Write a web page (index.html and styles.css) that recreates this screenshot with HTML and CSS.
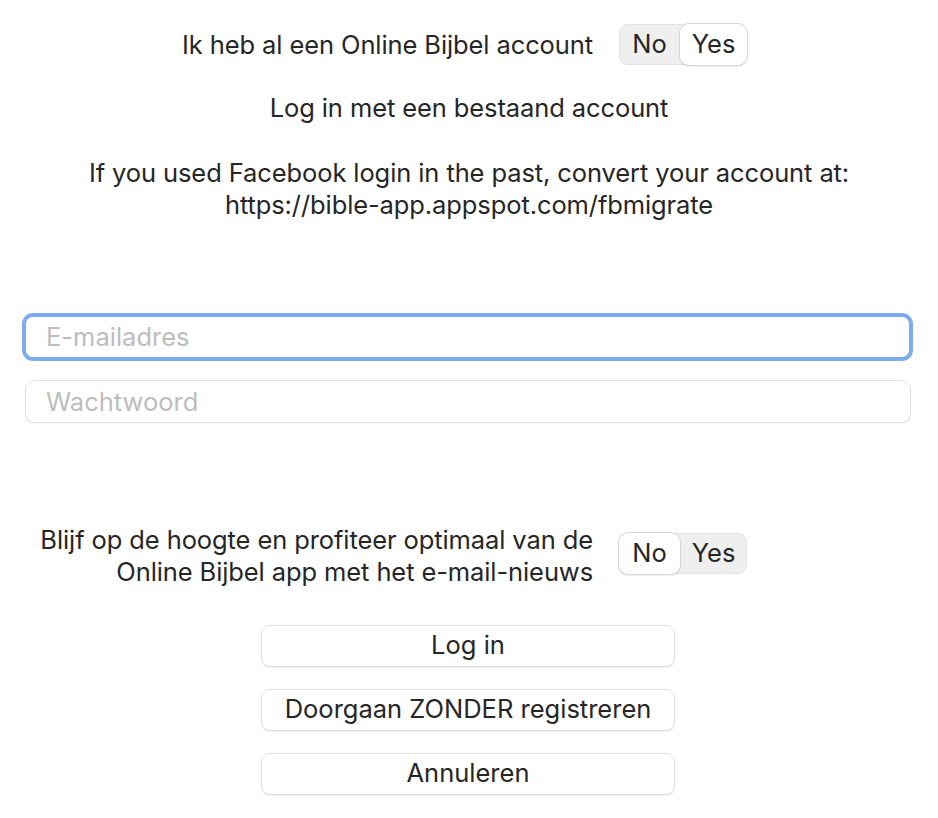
FILE: index.html
```html
<!DOCTYPE html>
<html>
<head>
<meta charset="utf-8">
<link rel="stylesheet" href="styles.css">
</head>
<body>
<div class="page">
  <div class="option-row first">
    <div class="option-label">Ik heb al een Online Bijbel account</div>
    <div class="segmented">
      <span class="seg no">No</span>
      <span class="seg yes selected">Yes</span>
    </div>
  </div>

  <p class="info login-title">Log in met een bestaand account</p>
  <p class="info fb">If you used Facebook login in the past, convert your account at:<br>https://bible-app.appspot.com/fbmigrate</p>

  <div class="fields">
    <div class="focus-ring"><input class="field" type="text" placeholder="E-mailadres"></div>
    <div class="plain"><input class="field" type="password" placeholder="Wachtwoord"></div>
  </div>

  <div class="option-row second">
    <div class="option-label">Blijf op de hoogte en profiteer optimaal van de<br>Online Bijbel app met het e-mail-nieuws</div>
    <div class="segmented">
      <span class="seg no selected">No</span>
      <span class="seg yes">Yes</span>
    </div>
  </div>

  <div class="buttons">
    <button class="btn">Log in</button>
    <button class="btn">Doorgaan ZONDER registreren</button>
    <button class="btn">Annuleren</button>
  </div>
</div>
</body>
</html>
```

FILE: styles.css
```css
* { box-sizing: border-box; }
html, body { margin: 0; padding: 0; background: #ffffff; }
body {
  font-family: Inter, "Noto Sans", "Liberation Sans", sans-serif;
  font-size: 25.5px;
  color: #262626;
  width: 938px;
  height: 818px;
  overflow: hidden;
}
.page { display: flex; flex-direction: column; }

.option-row {
  display: grid;
  grid-template-columns: 593px 128px;
  column-gap: 26px;
  align-items: start;
}
.option-row.first { margin-top: 24px; height: 41px; align-items: center; }
.option-row.second { margin-top: 102px; height: 64px; }
.option-row.second .segmented { margin-top: 9px; }
.option-label { text-align: right; line-height: 32px; letter-spacing: -0.1px; }

.segmented {
  display: flex;
  height: 41px;
  background: #efefef;
  border-radius: 9px;
  box-shadow: inset 0 0 0 1px #e2e2e2;
}
.seg {
  display: flex;
  align-items: center;
  justify-content: center;
  border-radius: 9px;
  line-height: 1;
  padding-bottom: 1px;
}
.seg.no { width: 61px; }
.seg.yes { width: 67px; }
.seg.selected {
  background: #ffffff;
  box-shadow: 0 0 0 1px #d8d8d8, 0 1px 2px rgba(0,0,0,0.25);
}

.info { margin: 0; text-align: center; line-height: 32px; letter-spacing: -0.1px; }
.login-title { margin-top: 27px; }
.fb { margin-top: 33px; }

.fields {
  margin-top: 92px;
  padding: 0 25px 0 22px;
  display: flex;
  flex-direction: column;
  gap: 20px;
}
.focus-ring {
  border: 4px solid #7eaaf2;
  border-radius: 11px;
  height: 48px;
}
.plain { padding: 0 3px 0 4px; }
.field {
  width: 100%;
  border: none;
  outline: none;
  background: #fff;
  font-family: inherit;
  font-size: 25.5px;
  color: #262626;
  padding: 0 20px 1px;
  border-radius: 8px;
}
.focus-ring .field { height: 40px; }
.plain .field {
  height: 41px;
  box-shadow: 0 0 0 1px #e0e0e0, 0 1px 1px rgba(0,0,0,0.15);
}
.field::placeholder { color: #bdbdbd; }

.buttons {
  margin-top: 38px;
  display: flex;
  flex-direction: column;
  align-items: center;
  gap: 24px;
}
.btn {
  width: 412px;
  height: 40px;
  margin-left: -2px;
  background: #ffffff;
  border: none;
  border-radius: 8px;
  box-shadow: 0 0 0 1px #e0e0e0, 0 1px 2px rgba(0,0,0,0.22);
  font-family: inherit;
  font-size: 25.5px;
  color: #262626;
  padding: 0 0 3px;
}
```
